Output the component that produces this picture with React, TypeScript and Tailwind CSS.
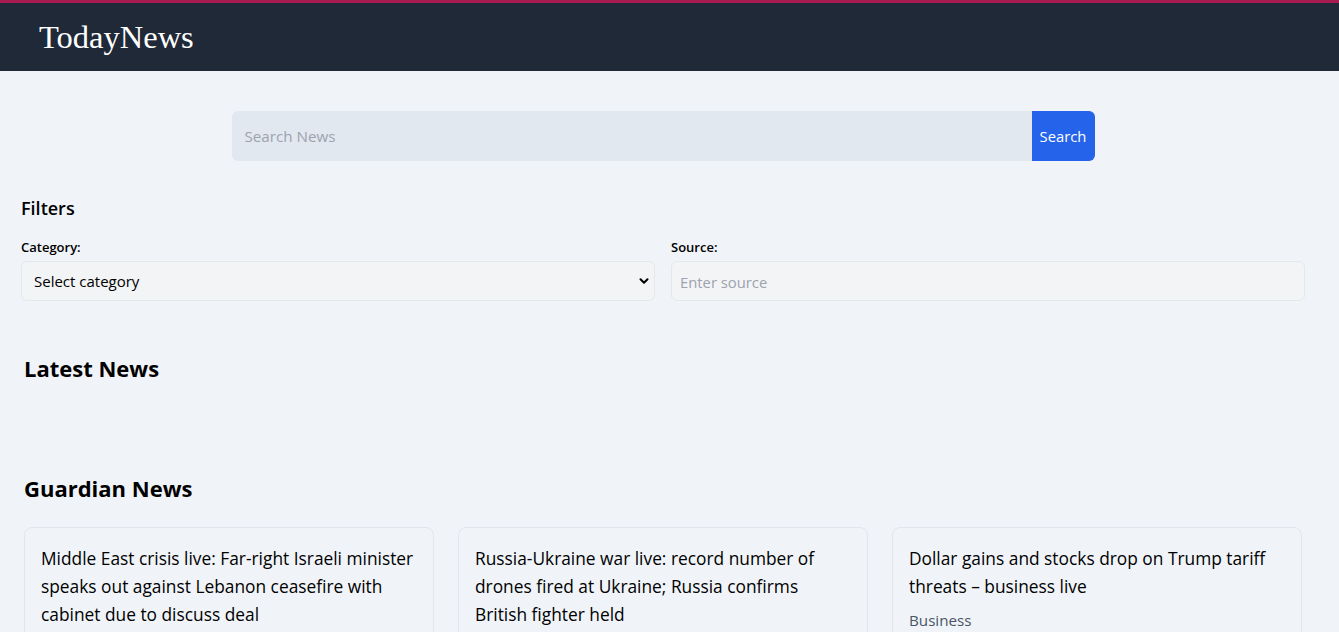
import { ChevronDown } from "lucide-react";

const SANS = "font-['Open_Sans','Noto_Sans',sans-serif]";

type Article = {
  title: string;
  section?: string;
};

const GUARDIAN: Article[] = [
  {
    title:
      "Middle East crisis live: Far-right Israeli minister speaks out against Lebanon ceasefire with cabinet due to discuss deal",
  },
  {
    title:
      "Russia-Ukraine war live: record number of drones fired at Ukraine; Russia confirms British fighter held",
  },
  {
    title: "Dollar gains and stocks drop on Trump tariff threats – business live",
    section: "Business",
  },
];

function Header() {
  return (
    <header className="h-[71px] border-t-[3px] border-[#a61b50] bg-[#1f2937] pl-[39px]">
      <h1 className="pt-[16px] font-['Liberation_Serif',Georgia,serif] text-[32.5px] leading-[36px] text-white">
        TodayNews
      </h1>
    </header>
  );
}

function SearchBar() {
  return (
    <div className="mx-auto mt-10 flex h-[50px] w-[863px]">
      <input
        className="h-full flex-1 rounded-l-md bg-[#e2e8f0] px-[13px] text-[15.2px] text-gray-700 outline-none placeholder:text-[#9ca3af]"
        placeholder="Search News"
      />
      <button className="h-full w-[63px] rounded-r-md bg-[#2563eb] text-[14.8px] text-white">
        Search
      </button>
    </div>
  );
}

function Filters() {
  return (
    <section className="mt-[33px]">
      <h2 className="text-[18px] font-semibold leading-7 text-black">Filters</h2>
      <div className="mt-[15px] grid grid-cols-2 gap-4">
        <label className="flex flex-col">
          <span className="text-[13px] font-semibold leading-5 text-black">Category:</span>
          <div className="relative mt-1">
            <select className="h-10 w-full appearance-none rounded-md border border-[#e5e7eb] bg-[#f3f4f6] px-3 pt-px text-[15px] text-black outline-none">
              <option>Select category</option>
            </select>
            <ChevronDown
              size={14}
              strokeWidth={3.5}
              className="pointer-events-none absolute right-[4px] top-[13px] text-black"
            />
          </div>
        </label>
        <label className="flex flex-col">
          <span className="text-[13px] font-semibold leading-5 text-black">Source:</span>
          <input
            className="mt-1 h-10 w-full rounded-md border border-[#e5e7eb] bg-[#f3f4f6] px-[8px] pt-px text-[14.8px] outline-none placeholder:text-[#9ca3af]"
            placeholder="Enter source"
          />
        </label>
      </div>
    </section>
  );
}

function NewsCard({ article }: { article: Article }) {
  return (
    <article className="rounded-lg border border-[#e2e6ec] p-4 pb-6">
      <h3 className="text-[17.33px] font-medium leading-7 text-black">{article.title}</h3>
      {article.section && (
        <p className="mt-2 text-[15.2px] leading-6 text-[#4b5563]">{article.section}</p>
      )}
    </article>
  );
}

export default function App() {
  return (
    <div className={`min-h-screen bg-[#f0f4f9] ${SANS}`}>
      <Header />
      <main className="pl-[21px] pr-[34px]">
        <SearchBar />
        <Filters />
        <section className="mt-[51px] px-[3px]">
          <h2 className="text-[22px] font-bold leading-8 text-black">Latest News</h2>
        </section>
        <section className="mt-[88px] px-[3px]">
          <h2 className="text-[22px] font-bold leading-8 text-black">Guardian News</h2>
          <div className="mt-[23px] grid grid-cols-3 gap-6">
            {GUARDIAN.map((a) => (
              <NewsCard key={a.title} article={a} />
            ))}
          </div>
        </section>
      </main>
    </div>
  );
}
